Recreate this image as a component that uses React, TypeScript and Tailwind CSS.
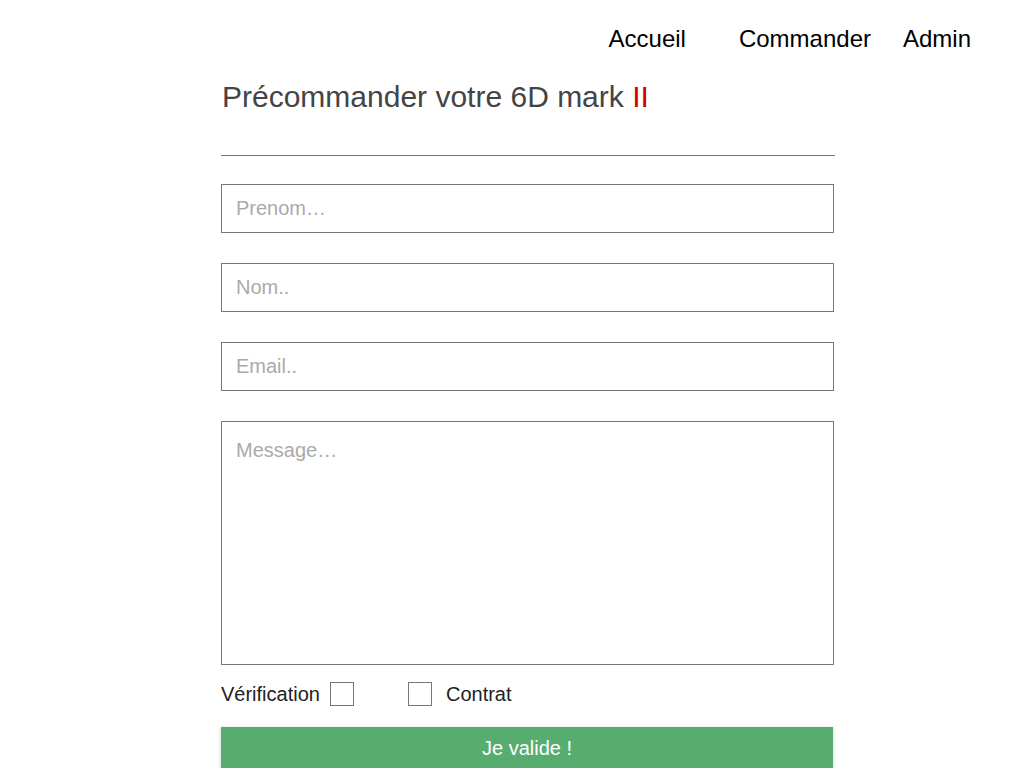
import React from 'react';

export default function App() {
  return (
    <div className="min-h-screen bg-white font-['Liberation_Sans',Arial,sans-serif]">
      {/* Nav */}
      <nav className="flex justify-end pr-[53px] pt-[25px] text-[24px] leading-[28px] text-black">
        <a href="#" className="mr-[53px]">Accueil</a>
        <a href="#" className="mr-[32px]">Commander</a>
        <a href="#">Admin</a>
      </nav>

      <main className="ml-[221px] w-[614px]">
        <h1 className="mt-[27px] ml-[1px] text-[30px] leading-[34px] text-[#444]">
          Précommander votre 6D mark <span className="text-[#d40000]">II</span>
        </h1>
        <hr className="mt-[41px] border-t border-[#777]" />

        <form className="mt-[28px] flex flex-col w-[613px]">
          <input
            placeholder="Prenom…"
            className="h-[49px] border border-[#777] px-[14px] text-[20px] text-[#333] placeholder:text-[#aaa] outline-none"
          />
          <input
            placeholder="Nom.."
            className="mt-[30px] h-[49px] border border-[#777] px-[14px] text-[20px] text-[#333] placeholder:text-[#aaa] outline-none"
          />
          <input
            placeholder="Email.."
            className="mt-[30px] h-[49px] border border-[#777] px-[14px] text-[20px] text-[#333] placeholder:text-[#aaa] outline-none"
          />
          <textarea
            placeholder="Message…"
            className="mt-[30px] h-[244px] resize-none border border-[#777] px-[14px] pt-[13px] text-[20px] text-[#333] placeholder:text-[#aaa] outline-none"
          />

          <div className="mt-[17px] flex h-[24px] items-center text-[20px] leading-[24px] text-[#222]">
            <span>Vérification</span>
            <span className="ml-[10px] h-[24px] w-[24px] border border-[#777]" />
            <span className="ml-[54px] h-[24px] w-[24px] border border-[#777]" />
            <span className="ml-[14px]">Contrat</span>
          </div>

          <button
            type="button"
            className="mt-[21px] h-[48px] w-[612px] bg-[#57ad6f] pb-[6px] text-[20px] text-white shadow-[0_1px_4px_rgba(0,0,0,0.2)]"
          >
            Je valide !
          </button>
        </form>
      </main>
    </div>
  );
}
